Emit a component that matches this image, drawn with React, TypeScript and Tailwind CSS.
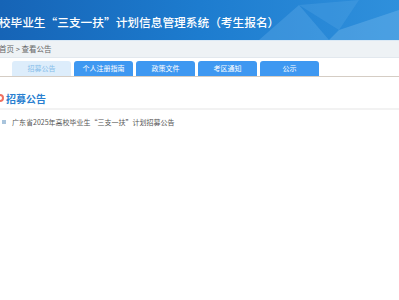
import React from "react";

const cjk = { fontFamily: '"Noto Sans CJK SC", "Liberation Sans", sans-serif' };

export default function App() {
  const tabs = ["个人注册指南", "政策文件", "考区通知", "公示"];
  return (
    <div className="w-[399px] h-[300px] bg-white overflow-hidden" style={cjk}>
      <div className="relative h-[40px] overflow-hidden bg-gradient-to-r from-[#1664b6] via-[#1d7ccf] to-[#2f90dc]">
        <div className="absolute right-0 top-0 h-[40px] w-[160px] opacity-30">
          <svg width="160" height="40" viewBox="0 0 160 40">
            <polygon points="20,40 60,5 90,40" fill="#6fb6ee" />
            <polygon points="60,5 120,0 100,30" fill="#5aa9e8" />
            <polygon points="100,30 160,10 160,40 90,40" fill="#8cc6f2" />
          </svg>
        </div>
        <div className="relative flex h-full items-center pt-[3px] whitespace-nowrap text-[11.7px] font-medium text-white ml-[-48px]">
          广东省高校毕业生“三支一扶”计划信息管理系统（考生报名）
        </div>
      </div>
      <div className="h-[18px] bg-[#eef2f5] border-t border-[#dbe9f5] border-b border-b-[#e2e8ee] flex items-center text-[7.5px] text-[#666] whitespace-nowrap ml-[-1px]">
        首页 &gt; 查看公告
      </div>
      <div className="mt-[3px] flex items-end gap-[3px] pl-[12px] border-b border-[#d5cdc4]">
        <div className="w-[59px] h-[15px] rounded-t-[3px] bg-[#ddedfb] text-[#86bdea] text-[7px] flex items-center justify-center">
          招募公告
        </div>
        {tabs.map((t) => (
          <div
            key={t}
            className="w-[59px] h-[15px] rounded-t-[3px] bg-[#3e98f1] text-white text-[7px] flex items-center justify-center"
          >
            {t}
          </div>
        ))}
      </div>
      <div className="mt-[14px] flex items-center gap-[2px] ml-[-4px] h-[14px]">
        <span className="w-[8px] h-[8px] rounded-full border-[2px] border-[#f07060] bg-white" />
        <span className="text-[10px] font-bold text-[#2a7fd0]">招募公告</span>
      </div>
      <div className="mt-[3px] h-[2px] bg-[#f2f2f2]" />
      <div className="mt-[7px] flex items-center gap-[6px] pl-[2px] text-[7px] text-[#555] whitespace-nowrap">
        <span className="w-[4px] h-[4px] bg-[#a9c4dc]" />
        <span>广东省2025年高校毕业生“三支一扶”计划招募公告</span>
      </div>
    </div>
  );
}
